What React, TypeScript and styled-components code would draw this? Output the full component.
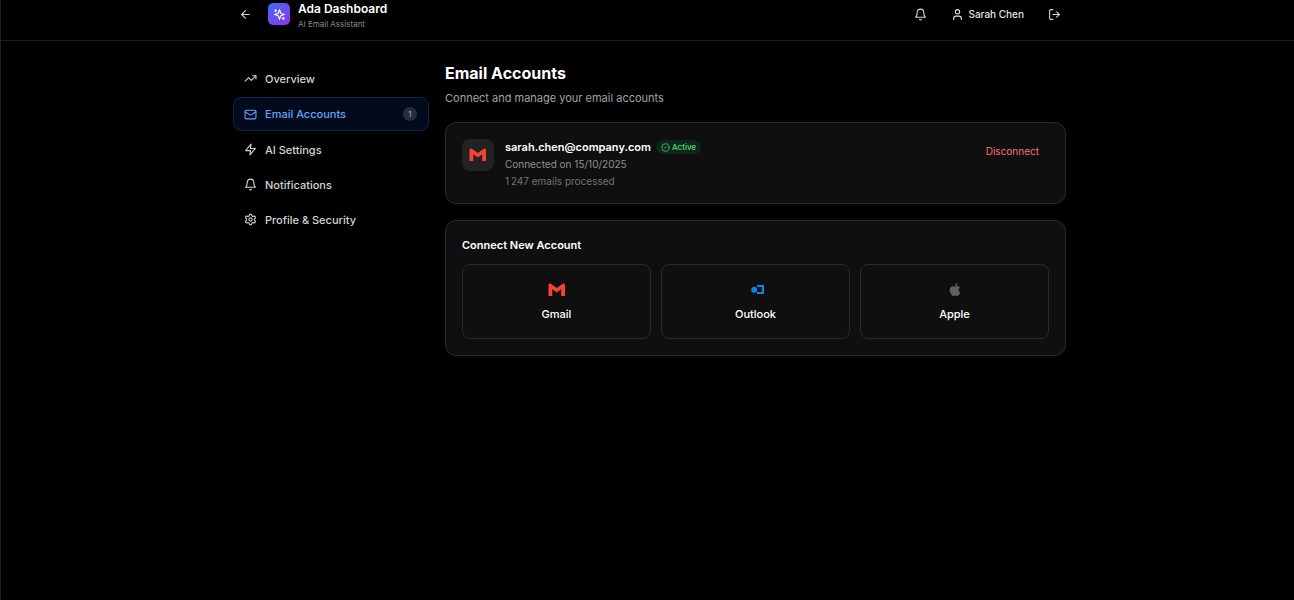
import React from "react";
import styled, { createGlobalStyle } from "styled-components";
import {
  ArrowLeft,
  CircleCheck,
  LogOut,
  Mail,
  Settings,
  TrendingUp,
  User,
} from "lucide-react";

const GlobalStyle = createGlobalStyle`
  *, *::before, *::after { box-sizing: border-box; }
  body {
    margin: 0;
    background: #000;
    color: #fff;
    font-family: Inter, "Liberation Sans", sans-serif;
    -webkit-font-smoothing: antialiased;
  }
  h1, h2, h3, p { margin: 0; }
  button {
    font-family: inherit;
    color: inherit;
    background: none;
    border: 0;
    padding: 0;
    cursor: pointer;
  }
`;

const Page = styled.div`
  min-height: 100vh;
  border-left: 1px solid #1f1f1f;
`;

const Header = styled.header`
  border-bottom: 1px solid #1f1f1f;
`;

const HeaderInner = styled.div`
  display: flex;
  align-items: center;
  justify-content: space-between;
  max-width: 837px;
  height: 40px;
  margin: 0 auto;
  padding: 0 5px 12px 10px;
`;

const Brand = styled.div`
  display: flex;
  align-items: center;
  gap: 8px;
`;

const BrandText = styled.div`
  padding-top: 2px;
`;

const IconButton = styled.button`
  display: flex;
  color: #d4d4d4;
`;

const Logo = styled.span`
  display: flex;
  align-items: center;
  justify-content: center;
  width: 22px;
  height: 22px;
  margin-left: 8px;
  border-radius: 5px;
  background: linear-gradient(135deg, #3b6cf6, #9333ea);
`;

const BrandName = styled.h1`
  font-size: 12px;
  line-height: 16px;
  font-weight: 600;
`;

const BrandNote = styled.p`
  margin-top: 1px;
  font-size: 8px;
  line-height: 12px;
  color: #8a8a8a;
`;

const Actions = styled.div`
  display: flex;
  align-items: center;
  gap: 24px;
`;

const UserButton = styled(IconButton)`
  align-items: center;
  gap: 4px;
  color: #e5e5e5;
  font-size: 10px;
  line-height: 16px;
  font-weight: 500;
`;

const Content = styled.div`
  display: grid;
  grid-template-columns: 196px minmax(0, 1fr);
  gap: 16px;
  align-items: start;
  max-width: 837px;
  margin: 0 auto;
  padding: 21px 0 0 4px;
`;

const Nav = styled.nav`
  display: flex;
  flex-direction: column;
  gap: 2px;
`;

const NavLink = styled.a<{ $active?: boolean }>`
  display: flex;
  align-items: center;
  gap: 8px;
  height: ${(p) => (p.$active ? 34 : 33)}px;
  padding: 0 11px 0 10px;
  border: 1px solid ${(p) => (p.$active ? "#0c2450" : "transparent")};
  border-radius: 8px;
  background: ${(p) => (p.$active ? "#030a1c" : "transparent")};
  color: ${(p) => (p.$active ? "#60a5fa" : "#d4d4d4")};
  font-size: 11px;
  line-height: 16px;
  font-weight: 500;
  text-decoration: none;
`;

const Count = styled.span`
  display: flex;
  align-items: center;
  justify-content: center;
  width: 14px;
  height: 14px;
  margin-left: auto;
  border-radius: 7px;
  background: #252c3a;
  font-size: 8px;
`;

const Main = styled.main`
  display: flex;
  flex-direction: column;
  gap: 16px;
`;

const Title = styled.h2`
  font-size: 16px;
  line-height: 22px;
  font-weight: 700;
`;

const Lead = styled.p`
  margin-top: 6px;
  font-size: 11px;
  line-height: 16px;
  color: #a3a3a3;
`;

const Card = styled.section`
  padding: 16px;
  border: 1px solid #2a2a2a;
  border-radius: 11px;
  background: #0f0f0f;
`;

const AccountCard = styled(Card)`
  display: flex;
  align-items: flex-start;
  gap: 11px;
  padding-bottom: 14px;
`;

const ProviderTile = styled.span`
  display: flex;
  align-items: center;
  justify-content: center;
  width: 32px;
  height: 32px;
  border-radius: 8px;
  background: #222;
`;

const Details = styled.div`
  flex: 1;
`;

const AddressRow = styled.div`
  display: flex;
  align-items: center;
  gap: 5px;
`;

const Address = styled.h3`
  font-size: 11px;
  line-height: 16px;
  font-weight: 600;
`;

const Status = styled.span`
  display: flex;
  align-items: center;
  gap: 2px;
  height: 14px;
  padding: 0 5px;
  border-radius: 7px;
  background: #0f2518;
  color: #4ade80;
  font-size: 8px;
  font-weight: 500;
`;

const Meta = styled.p<{ $dim?: boolean }>`
  margin-top: 1px;
  font-size: 10px;
  line-height: 16px;
  color: ${(p) => (p.$dim ? "#737373" : "#8f8f8f")};
`;

const DisconnectButton = styled.button`
  padding: 4px 10px;
  color: #f87171;
  font-size: 10px;
  line-height: 16px;
`;

const SectionTitle = styled.h3`
  font-size: 11px;
  line-height: 16px;
  font-weight: 600;
`;

const Providers = styled.div`
  display: grid;
  grid-template-columns: repeat(3, minmax(0, 1fr));
  gap: 10px;
  margin-top: 11px;
`;

const ProviderButton = styled.button`
  display: flex;
  flex-direction: column;
  align-items: center;
  gap: 7px;
  padding: 16px;
  border: 1px solid #2a2a2a;
  border-radius: 8px;
  font-size: 11px;
  line-height: 16px;
  font-weight: 500;
`;

const StrokeIcon = ({
  size = 13,
  children,
}: {
  size?: number;
  children: React.ReactNode;
}) => (
  <svg
    width={size}
    height={size}
    viewBox="0 0 24 24"
    fill="none"
    stroke="currentColor"
    strokeWidth="2"
    strokeLinecap="round"
    strokeLinejoin="round"
    aria-hidden="true"
  >
    {children}
  </svg>
);

const BellIcon = ({ size }: { size?: number }) => (
  <StrokeIcon size={size}>
    <path d="M6 8a6 6 0 0 1 12 0c0 7 3 9 3 9H3s3-2 3-9" />
    <path d="M10.3 21a1.94 1.94 0 0 0 3.4 0" />
  </StrokeIcon>
);

const BoltIcon = ({ size }: { size?: number }) => (
  <StrokeIcon size={size}>
    <path d="M13 2 3 14h9l-1 8 10-12h-9z" />
  </StrokeIcon>
);

const SparklesIcon = ({ size }: { size?: number }) => (
  <StrokeIcon size={size}>
    <path d="m12 3-1.9 5.8a2 2 0 0 1-1.3 1.3L3 12l5.8 1.9a2 2 0 0 1 1.3 1.3L12 21l1.9-5.8a2 2 0 0 1 1.3-1.3L21 12l-5.8-1.9a2 2 0 0 1-1.3-1.3Z" />
    <path d="M5 3v4M19 17v4M3 5h4M17 19h4" />
  </StrokeIcon>
);

const GmailLogo = () => (
  <svg width="18" height="18" viewBox="0 0 18 18" aria-hidden="true">
    <path
      fill="#f44336"
      d="M.5 15V4.2C.5 2.600 2 2 3.200 2.900L8.800 7 14.500 2.900C15.600 2 17 2.600 17 4.200V15H13.200V8.300L8.800 11.500 4.300 8.300V15Z"
    />
  </svg>
);

const OutlookLogo = () => (
  <svg width="18" height="18" viewBox="0 0 18 18" aria-hidden="true">
    <circle cx="7.2" cy="8.7" r="3" fill="#0a84e8" />
    <path fill="#0a84e8" d="M10 4H17V13H10V11H14.800V6H10Z" />
  </svg>
);

const AppleLogo = () => (
  <svg width="14" height="18" viewBox="-1 -2 26 30" aria-hidden="true">
    <path
      fill="#616161"
      d="M12.15 6.9c-.95 0-2.42-1.08-3.96-1.04-2.04.03-3.91 1.18-4.96 3.01-2.12 3.68-.55 9.1 1.52 12.09 1.01 1.45 2.21 3.09 3.79 3.04 1.52-.07 2.09-.99 3.94-.99 1.83 0 2.35.99 3.96.95 1.64-.03 2.68-1.48 3.68-2.95 1.16-1.69 1.64-3.32 1.66-3.41-.04-.01-3.18-1.22-3.22-4.86-.03-3.04 2.48-4.49 2.6-4.56-1.43-2.09-3.62-2.32-4.39-2.38-2-.16-3.68 1.09-4.61 1.09zM15.53 3.83c.84-1.01 1.4-2.43 1.25-3.83-1.21.05-2.66.8-3.53 1.82-.78.9-1.45 2.34-1.27 3.71 1.34.1 2.71-.69 3.56-1.7"
    />
  </svg>
);

const navItems = [
  { label: "Overview", icon: TrendingUp },
  { label: "Email Accounts", icon: Mail, count: 1, active: true },
  { label: "AI Settings", icon: BoltIcon },
  { label: "Notifications", icon: BellIcon },
  { label: "Profile & Security", icon: Settings },
];

const providers = [
  { name: "Gmail", logo: GmailLogo },
  { name: "Outlook", logo: OutlookLogo },
  { name: "Apple", logo: AppleLogo },
];

export default function App() {
  return (
    <Page>
      <GlobalStyle />
      <Header>
        <HeaderInner>
          <Brand>
            <IconButton aria-label="Back">
              <ArrowLeft size={13} />
            </IconButton>
            <Logo>
              <SparklesIcon />
            </Logo>
            <BrandText>
              <BrandName>Ada Dashboard</BrandName>
              <BrandNote>AI Email Assistant</BrandNote>
            </BrandText>
          </Brand>
          <Actions>
            <IconButton aria-label="Notifications">
              <BellIcon />
            </IconButton>
            <UserButton>
              <User size={13} />
              Sarah Chen
            </UserButton>
            <IconButton aria-label="Log out">
              <LogOut size={13} />
            </IconButton>
          </Actions>
        </HeaderInner>
      </Header>
      <Content>
        <Nav>
          {navItems.map(({ label, icon: Icon, count, active }) => (
            <NavLink
              key={label}
              href="#"
              $active={active}
              aria-current={active ? "page" : undefined}
            >
              <Icon size={13} />
              {label}
              {count && <Count>{count}</Count>}
            </NavLink>
          ))}
        </Nav>
        <Main>
          <div>
            <Title>Email Accounts</Title>
            <Lead>Connect and manage your email accounts</Lead>
          </div>
          <AccountCard>
            <ProviderTile>
              <GmailLogo />
            </ProviderTile>
            <Details>
              <AddressRow>
                <Address>sarah.chen@company.com</Address>
                <Status>
                  <CircleCheck size={9} />
                  Active
                </Status>
              </AddressRow>
              <Meta>Connected on 15/10/2025</Meta>
              <Meta $dim>{"1\u202f247 emails processed"}</Meta>
            </Details>
            <DisconnectButton>Disconnect</DisconnectButton>
          </AccountCard>
          <Card>
            <SectionTitle>Connect New Account</SectionTitle>
            <Providers>
              {providers.map(({ name, logo: ProviderLogo }) => (
                <ProviderButton key={name}>
                  <ProviderLogo />
                  {name}
                </ProviderButton>
              ))}
            </Providers>
          </Card>
        </Main>
      </Content>
    </Page>
  );
}
